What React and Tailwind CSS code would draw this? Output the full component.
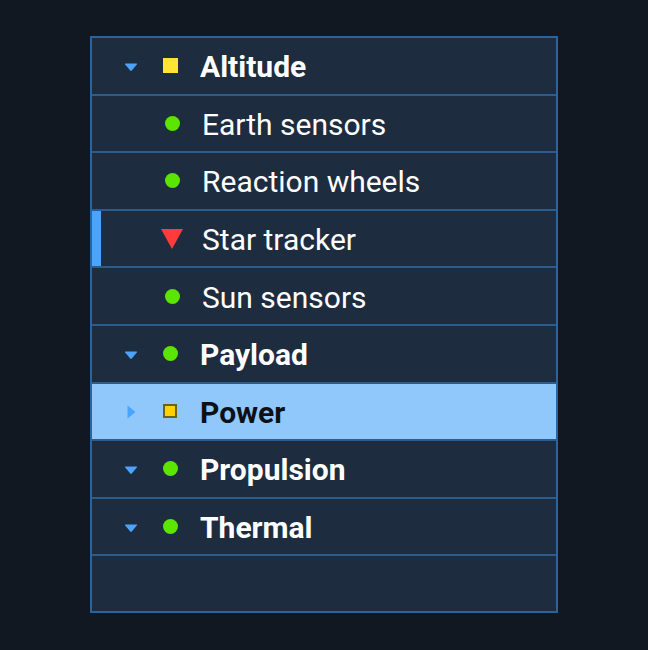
import React from 'react';

const tree = [
  { id: 'altitude', label: 'Altitude', group: true, open: true, status: 'warn' },
  { id: 'earth', label: 'Earth sensors', status: 'ok' },
  { id: 'wheels', label: 'Reaction wheels', status: 'ok' },
  { id: 'star', label: 'Star tracker', status: 'fault', flagged: true },
  { id: 'sun', label: 'Sun sensors', status: 'ok' },
  { id: 'payload', label: 'Payload', group: true, open: true, status: 'ok' },
  { id: 'power', label: 'Power', group: true, open: false, status: 'warn', selected: true },
  { id: 'propulsion', label: 'Propulsion', group: true, open: true, status: 'ok' },
  { id: 'thermal', label: 'Thermal', group: true, open: true, status: 'ok' },
];

function Caret({ open }) {
  if (open) {
    return (
      <svg width="14" height="10" viewBox="0 0 14 10">
        <path d="M1.5 1.5 H12.5 Q13.6 1.5 12.8 2.5 L7.8 8.6 Q7 9.5 6.2 8.6 L1.2 2.5 Q0.4 1.5 1.5 1.5 Z" fill="#4aa3ff" />
      </svg>
    );
  }
  return (
    <svg width="10" height="14" viewBox="0 0 10 14">
      <path d="M1.5 1.5 V12.5 Q1.5 13.6 2.5 12.8 L8.6 7.8 Q9.5 7 8.6 6.2 L2.5 1.2 Q1.5 0.4 1.5 1.5 Z" fill="#4aa3ff" />
    </svg>
  );
}

function StatusIcon({ status, selected }) {
  if (status === 'ok') return <span className="block w-[15px] h-[15px] rounded-full bg-[#5ce500]" />;
  if (status === 'fault') {
    return (
      <svg width="22" height="20" viewBox="0 0 22 20">
        <path d="M0 0 H22 L11 20 Z" fill="#ff3b3b" />
      </svg>
    );
  }
  if (selected) return <span className="block w-[14px] h-[14px] bg-[#ffd200] border-2 border-[#6f6214]" />;
  return <span className="block w-[15px] h-[15px] bg-[#ffe433]" />;
}

function Row({ node }) {
  return (
    <div
      className={`relative flex items-center h-[57.6px] border-b-2 border-[#2b5c8e] ${
        node.selected ? 'bg-[#90c8fc] text-[#0d1117]' : 'text-white'
      }`}
    >
      {node.flagged && <div className="absolute left-0 top-0 bottom-0 w-[9px] bg-[#4ba3fa]" />}
      <div className="ml-[31px] w-[16px] flex items-center justify-center pt-[2px]">
        {node.group && <Caret open={node.open} />}
      </div>
      <div className={`${node.group ? 'ml-[19px]' : 'ml-[21px]'} w-[24px] flex items-center justify-center`}>
        <StatusIcon status={node.status} selected={node.selected} />
      </div>
      <span className={`ml-[18px] text-[30px] leading-none pt-[3px] ${node.group ? 'font-bold' : 'font-normal'}`}>
        {node.label}
      </span>
    </div>
  );
}

export default function App() {
  return (
    <div className="min-h-[650px] bg-[#111821] pt-[36px]" style={{ fontFamily: 'Roboto, "Liberation Sans", sans-serif' }}>
      <div className="mx-auto w-[468px] bg-[#1d2c3f] border-2 border-[#2a64a0]">
        {tree.map((node) => (
          <Row key={node.id} node={node} />
        ))}
        <div className="h-[55px]" />
      </div>
    </div>
  );
}
